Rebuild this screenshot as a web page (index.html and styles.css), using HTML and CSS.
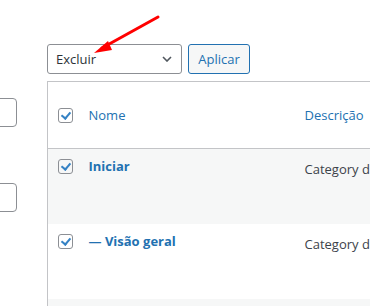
FILE: index.html
```html
<!DOCTYPE html>
<html lang="pt-BR">
<head>
    <meta charset="UTF-8">
    <title>Categorias</title>
    <link rel="stylesheet" href="styles.css">
</head>
<body>
    <div class="side">
        <div class="field"></div>
        <div class="field"></div>
    </div>
    <div class="content">
        <div class="tablenav">
            <div class="select">
                <span>Excluir</span>
                <svg class="chevron" width="10" height="6" viewBox="0 0 10 6"><path d="M1 1 L5 5 L9 1" fill="none" stroke="#50575e" stroke-width="1.6"/></svg>
            </div>
            <button class="button">Aplicar</button>
        </div>
        <table class="list">
            <thead>
                <tr>
                    <th class="cb"><span class="check"></span></th>
                    <th class="name"><a>Nome</a></th>
                    <th class="desc"><a>Descrição</a></th>
                </tr>
            </thead>
            <tbody>
                <tr class="alt">
                    <td class="cb"><span class="check"></span></td>
                    <td class="name"><strong>Iniciar</strong></td>
                    <td class="desc">Category description</td>
                </tr>
                <tr>
                    <td class="cb"><span class="check"></span></td>
                    <td class="name"><strong>— Visão geral</strong></td>
                    <td class="desc">Category description</td>
                </tr>
                <tr class="alt">
                    <td class="cb"></td>
                    <td class="name"></td>
                    <td class="desc"></td>
                </tr>
            </tbody>
        </table>
    </div>
    <svg class="arrow" width="80" height="50" viewBox="0 0 80 50">
        <line x1="76" y1="3" x2="20" y2="34" stroke="#ff0000" stroke-width="3" stroke-linecap="round"/>
        <path d="M12 39 L26 27 L30 36 Z" fill="#ff0000"/>
    </svg>
</body>
</html>
```

FILE: styles.css
```css
body {
    margin: 0;
    background: #ffffff;
    font-family: 'Open Sans', sans-serif;
    font-size: 13px;
    color: #1d2327;
    display: flex;
    overflow: hidden;
    height: 306px;
    position: relative;
}

.side {
    width: 47px;
    flex: none;
    padding-top: 98px;
}

.field {
    width: 100px;
    height: 27px;
    margin-left: -85px;
    border: 1px solid #8c8f94;
    border-radius: 4px;
    margin-bottom: 56px;
}

.content {
    padding-top: 44px;
    flex: none;
}

.tablenav {
    display: flex;
    gap: 6px;
    height: 30px;
}

.select {
    box-sizing: border-box;
    width: 135px;
    height: 30px;
    border: 1px solid #8c8f94;
    border-radius: 3px;
    display: flex;
    align-items: center;
    justify-content: space-between;
    padding: 0 9px 0 8px;
    color: #2c3338;
}

.button {
    box-sizing: border-box;
    width: 62px;
    height: 30px;
    border: 1px solid #2271b1;
    border-radius: 3px;
    background: #f6f7f7;
    color: #2271b1;
    font-family: inherit;
    font-size: 13px;
    padding: 0;
}

.list {
    margin-top: 7px;
    border-collapse: collapse;
    border-top: 1px solid #c3c4c7;
    border-left: 1px solid #c3c4c7;
    width: 400px;
    table-layout: fixed;
}

.list th,
.list td {
    text-align: left;
    font-weight: normal;
    vertical-align: top;
    padding: 0;
}

.list thead tr {
    height: 67px;
}

.list thead th {
    vertical-align: middle;
    border-bottom: 1px solid #c3c4c7;
}

.list tbody tr {
    height: 75px;
}

.list .alt td {
    background: #f6f7f7;
}

.list a {
    color: #2271b1;
}

.cb {
    width: 41px;
    padding-left: 10px !important;
    box-sizing: border-box;
}

.name {
    width: 216px;
}

.list tbody .cb {
    padding-top: 10px;
}

.list tbody .name {
    padding-top: 8px;
    color: #2271b1;
}

.list tbody .desc {
    padding-top: 11px;
    color: #3c434a;
    white-space: nowrap;
}

.check {
    display: block;
    width: 13px;
    height: 13px;
    border: 1px solid #8c8f94;
    border-radius: 3px;
    position: relative;
}

.check::after {
    content: '';
    position: absolute;
    left: 4px;
    top: 1px;
    width: 4px;
    height: 7px;
    border: solid #3582c4;
    border-width: 0 2px 2px 0;
    transform: rotate(40deg);
}

.arrow {
    position: absolute;
    left: 82px;
    top: 14px;
}
```
